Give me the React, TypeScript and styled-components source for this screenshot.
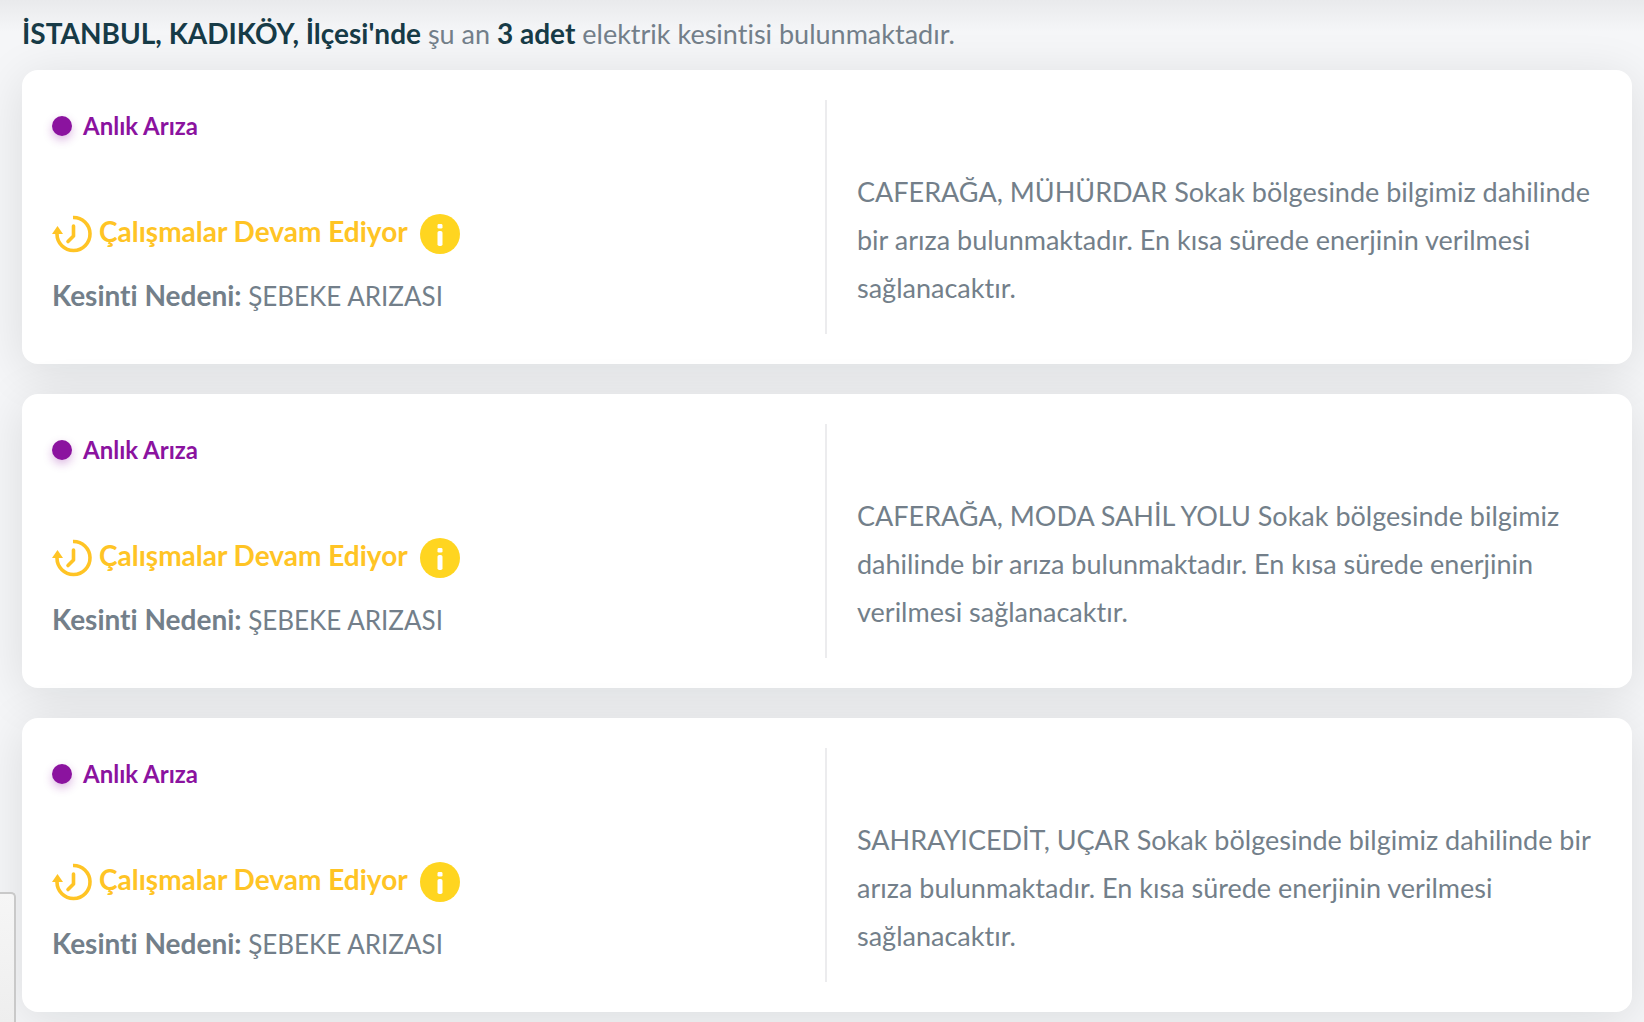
import React from "react";
import styled, { createGlobalStyle } from "styled-components";

const GlobalStyle = createGlobalStyle`
  *, *::before, *::after { box-sizing: border-box; }
  body {
    margin: 0;
    background: #f5f6f8;
    color: #737f8a;
    font-family: Lato, "Noto Sans", sans-serif;
    font-size: 27px;
    font-variant-ligatures: none;
    line-height: 48px;
  }
`;

const Page = styled.main`
  padding: 10px 12px 10px 22px;
  background: linear-gradient(#e9eaec, #f5f6f8 32px);
  overflow: hidden;
`;

const Summary = styled.h1`
  margin: 0 0 12px;
  font-size: 27px;
  font-weight: 400;
`;

const Strong = styled.strong`
  color: #173b47;
  font-size: 28px;
  font-weight: 700;
  line-height: 1;
`;

const OutageList = styled.ul`
  display: grid;
  gap: 30px;
  margin: 0;
  padding: 0;
  list-style: none;
`;

const Card = styled.li`
  display: grid;
  grid-template-columns: 1fr 1fr;
  padding: 30px;
  border-radius: 16px;
  background: #fff;
  box-shadow: 0 8px 50px rgba(12, 16, 16, 0.11);
`;

const Details = styled.div`
  display: flex;
  flex-direction: column;
  border-right: 2px solid #ececee;
`;

const Kind = styled.div`
  display: flex;
  align-items: center;
  gap: 11px;
  height: 52px;
  margin-bottom: 52px;
  color: #8b139f;
  font-size: 24px;
  font-weight: 700;
`;

const Dot = styled.span`
  width: 20px;
  height: 20px;
  border-radius: 50%;
  background: currentColor;
  box-shadow: 0 4px 10px rgba(139, 19, 159, 0.3);
`;

const Status = styled.div`
  display: flex;
  align-items: center;
  height: 60px;
  color: #ffc425;
  font-size: 28px;
  font-weight: 700;
`;

const StatusText = styled.span`
  margin: 0 12px 0 7px;
  padding-bottom: 6px;
`;

const InfoButton = styled.button`
  display: flex;
  padding: 0;
  border: 0;
  background: none;
  cursor: pointer;
`;

const Reason = styled.p`
  margin: 8px 0 14px;
  font-size: 26px;
`;

const ReasonLabel = styled.b`
  font-size: 28px;
  line-height: 1;
`;

const Description = styled.p`
  align-self: end;
  margin: 0;
  padding: 0 0 22px 30px;
`;

const SidePanel = styled.aside`
  position: fixed;
  bottom: 0;
  left: 0;
  width: 16px;
  height: 130px;
  border: solid #c9c9c9;
  border-width: 2px 2px 0 0;
  border-radius: 0 5px 0 0;
  background: linear-gradient(#f6f6f6, #eeeeee);
`;

const outages = [
  "CAFERAĞA, MÜHÜRDAR Sokak bölgesinde bilgimiz dahilinde bir arıza bulunmaktadır. En kısa sürede enerjinin verilmesi sağlanacaktır.",
  "CAFERAĞA, MODA SAHİL YOLU Sokak bölgesinde bilgimiz dahilinde bir arıza bulunmaktadır. En kısa sürede enerjinin verilmesi sağlanacaktır.",
  "SAHRAYICEDİT, UÇAR Sokak bölgesinde bilgimiz dahilinde bir arıza bulunmaktadır. En kısa sürede enerjinin verilmesi sağlanacaktır.",
];

function ClockIcon() {
  return (
    <svg width="40" height="40" viewBox="0 0 40 40" fill="none" aria-hidden="true">
      <path d="M21 3.5A16.5 16.5 0 1 1 5 20V17" stroke="currentColor" strokeWidth="3.6" />
      <path d="M5.5 12L11 20H0Z" fill="currentColor" />
      <path d="M21.5 12V22L16 27.5" stroke="currentColor" strokeWidth="3.6" strokeLinecap="round" strokeLinejoin="round" />
    </svg>
  );
}

function InfoIcon() {
  return (
    <svg width="40" height="40" viewBox="0 0 40 40" aria-hidden="true">
      <circle cx="20" cy="20" r="20" fill="#ffd520" />
      <rect x="17.5" y="10" width="5" height="4.6" rx="1.4" fill="#fff" />
      <rect x="17.5" y="17" width="5" height="15" rx="1.8" fill="#fff" />
    </svg>
  );
}

function OutageCard({ text }: { text: string }) {
  return (
    <Card>
      <Details>
        <Kind>
          <Dot />
          Anlık Arıza
        </Kind>
        <Status>
          <ClockIcon />
          <StatusText>Çalışmalar Devam Ediyor</StatusText>
          <InfoButton type="button" aria-label="Bilgi">
            <InfoIcon />
          </InfoButton>
        </Status>
        <Reason>
          <ReasonLabel>Kesinti Nedeni:</ReasonLabel> ŞEBEKE ARIZASI
        </Reason>
      </Details>
      <Description>{text}</Description>
    </Card>
  );
}

export default function App() {
  return (
    <>
      <GlobalStyle />
      <Page>
        <Summary>
          <Strong>İSTANBUL, KADIKÖY, İlçesi'nde</Strong> şu an <Strong>3 adet</Strong> elektrik kesintisi
          bulunmaktadır.
        </Summary>
        <OutageList>
          {outages.map((text) => (
            <OutageCard key={text} text={text} />
          ))}
        </OutageList>
      </Page>
      <SidePanel />
    </>
  );
}
